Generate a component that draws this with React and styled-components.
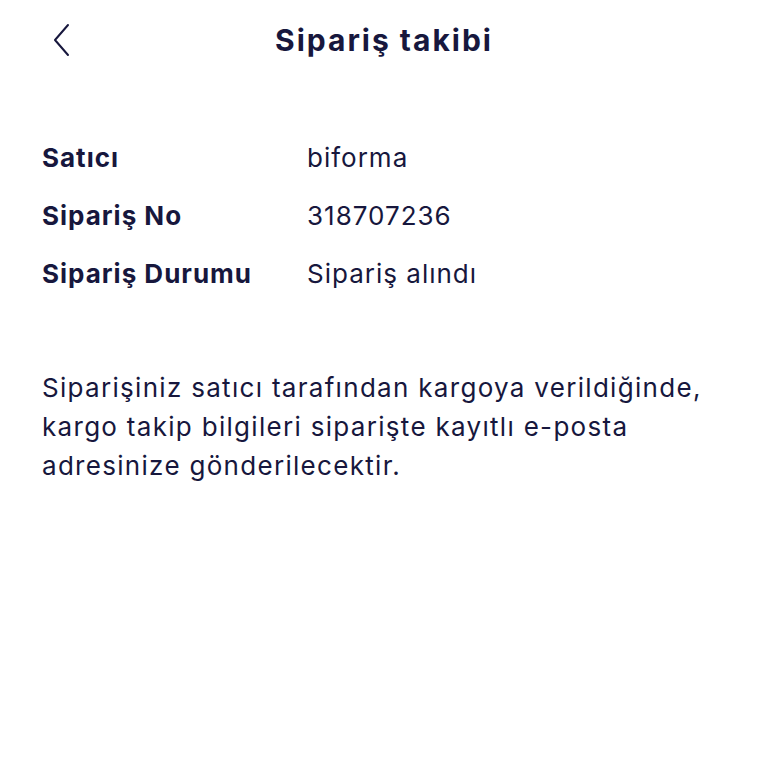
import React from 'react';
import styled, { createGlobalStyle } from 'styled-components';

const GlobalStyle = createGlobalStyle`
  body {
    margin: 0;
    background: #ffffff;
    font-family: Inter, "Noto Sans", sans-serif;
    color: #17173d;
  }
`;

const Page = styled.div`
  width: 768px;
  min-height: 768px;
  background: #ffffff;
`;

const Header = styled.header`
  position: relative;
  height: 80px;
  display: flex;
  align-items: center;
  justify-content: center;
`;

const BackButton = styled.button`
  position: absolute;
  left: 42px;
  top: 20px;
  width: 40px;
  height: 40px;
  padding: 0;
  border: none;
  background: none;
  display: flex;
  align-items: center;
  justify-content: center;
  color: #17173d;
`;

const Title = styled.h1`
  margin: 0;
  font-size: 30px;
  font-weight: 700;
  letter-spacing: 2px;
`;

const Details = styled.dl`
  margin: 59px 0 0;
  padding: 0 42px;
  display: grid;
  grid-template-columns: 265px 1fr;
  row-gap: 20px;
`;

const Label = styled.dt`
  font-size: 26px;
  font-weight: 700;
  line-height: 38px;
  letter-spacing: 1px;
`;

const Value = styled.dd`
  margin: 0;
  font-size: 26px;
  font-weight: 400;
  line-height: 38px;
  letter-spacing: 1px;
`;

const Note = styled.p`
  margin: 75px 0 0;
  padding: 0 42px;
  font-size: 26px;
  line-height: 39px;
  letter-spacing: 1.3px;
`;

const rows = [
  ['Satıcı', 'biforma'],
  ['Sipariş No', '318707236'],
  ['Sipariş Durumu', 'Sipariş alındı'],
];

const App = () => (
  <Page>
    <GlobalStyle />
    <Header>
      <BackButton aria-label="Geri">
        <svg width="20" height="34" viewBox="0 0 20 34" fill="none">
          <path d="M16 2 L3 17 L16 32" stroke="currentColor" strokeWidth="2" strokeLinecap="round" strokeLinejoin="round" />
        </svg>
      </BackButton>
      <Title>Sipariş takibi</Title>
    </Header>
    <Details>
      {rows.map(([label, value]) => (
        <React.Fragment key={label}>
          <Label>{label}</Label>
          <Value>{value}</Value>
        </React.Fragment>
      ))}
    </Details>
    <Note>
      Siparişiniz satıcı tarafından kargoya verildiğinde, kargo takip bilgileri siparişte kayıtlı e-posta adresinize gönderilecektir.
    </Note>
  </Page>
);

export default App;
